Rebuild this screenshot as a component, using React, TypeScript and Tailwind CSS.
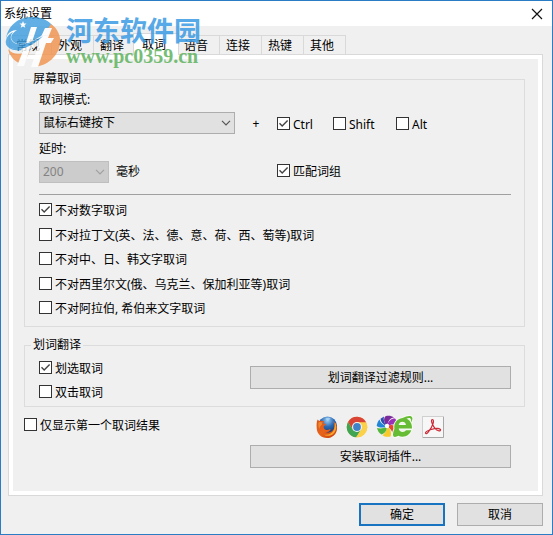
import React from "react";

const tabs = ["常规", "外观", "翻译", "取词", "语音", "连接", "热键", "其他"];

const languageRules = [
  { label: "不对数字取词", checked: true },
  { label: "不对拉丁文(英、法、德、意、荷、西、萄等)取词" },
  { label: "不对中、日、韩文字取词" },
  { label: "不对西里尔文(俄、乌克兰、保加利亚等)取词" },
  { label: "不对阿拉伯, 希伯来文字取词" },
];

type CheckProps = {
  label: string;
  checked?: boolean;
};

function Check({ label, checked }: CheckProps) {
  return (
    <label className="flex items-start gap-[3px] whitespace-nowrap leading-4">
      <span className="relative size-[13px] shrink-0">
        <input
          type="checkbox"
          defaultChecked={checked}
          className="peer block size-[13px] appearance-none border border-[#333333] bg-white"
        />
        <svg
          viewBox="0 0 13 13"
          className="pointer-events-none absolute inset-0 hidden size-[13px] peer-checked:block"
          fill="none"
          stroke="#444"
          strokeWidth="1.4"
        >
          <path d="M2.5 6.3 5.2 9 10.6 3.6" />
        </svg>
      </span>
      <span>{label}</span>
    </label>
  );
}

type SelectBoxProps = {
  id: string;
  value: string;
  disabled?: boolean;
  className: string;
};

function SelectBox({ id, value, disabled, className }: SelectBoxProps) {
  return (
    <div className={`relative ${className}`}>
      <select
        id={id}
        disabled={disabled}
        className="block h-[22px] w-full appearance-none border border-[#adadad] bg-[#e1e1e1] pl-[3px] pr-5 text-black opacity-100 disabled:border-[#bfbfbf] disabled:bg-[#cccccc] disabled:text-[#838383]"
      >
        <option>{value}</option>
      </select>
      <svg
        viewBox="0 0 10 6"
        className="pointer-events-none absolute right-1 top-2 h-[6px] w-[10px]"
        fill="none"
        stroke={disabled ? "#a0a0a0" : "#555"}
        strokeWidth="1.2"
      >
        <path d="M1 .8 5 4.8 9 .8" />
      </svg>
    </div>
  );
}

type PushButtonProps = {
  children: React.ReactNode;
  primary?: boolean;
  className?: string;
};

function PushButton({ children, primary, className = "" }: PushButtonProps) {
  return (
    <button
      type="button"
      className={[
        "h-[23px] bg-[#e1e1e1] text-center leading-4",
        primary ? "border-2 border-[#1874c0]" : "border border-[#adadad]",
        className,
      ].join(" ")}
    >
      {children}
    </button>
  );
}

function FirefoxIcon() {
  return (
    <svg viewBox="0 0 22 22" className="size-[22px]">
      <defs>
        <radialGradient id="ffGlobe" cx=".5" cy=".2" r=".75">
          <stop offset="0" stopColor="#9fd0f5" />
          <stop offset=".45" stopColor="#2c6bb5" />
          <stop offset="1" stopColor="#132a5e" />
        </radialGradient>
        <linearGradient id="ffFox" x1="0" y1="0" x2="1" y2="1">
          <stop offset="0" stopColor="#d9541b" />
          <stop offset=".5" stopColor="#e8641b" />
          <stop offset="1" stopColor="#c23a10" />
        </linearGradient>
      </defs>
      <circle cx="11.5" cy="10" r="9.5" fill="url(#ffGlobe)" />
      <path
        d="M1.6 3.6C2.2 4.5 3 5 3.8 5c1.6-.6 3.4-.3 4.6.6-.9.5-1.3 1.2-1.2 2l2.6.5c.2.9-1.6 1.5-2.1 2.5-.3 2 1.3 3.6 3.3 3.5 1.7-.1 2.2-1.3 3.7-.7-.9 2.2-3.4 3-5.6 2.3 3.6 2 8.7-.4 9.2-4.8.3-2.3-.4-4.2-1.5-5.8 2.5 1.6 4.5 4.4 4.2 7.8C20.5 18.2 16.4 22 11 22 5.3 22 .9 17.8.7 12.2.6 9 .4 6 1.6 3.6Z"
        fill="url(#ffFox)"
      />
      <path
        d="M19.2 6.5c1.7 3.7 1.3 8.5-1.8 11.3-2.8 2.5-7 2.6-9.9.6 4.2.9 8.7-.7 10.3-4.5 1-2.4.9-5.1 1.4-7.4Z"
        fill="#f5a52c"
      />
      <path d="M2.5 6.5c1.5-.8 3.4-.5 4.3.1-.9.7-1 1.7-.8 2.1-1.5 1-2.5 2.3-2.6 4.3C2.4 11 2 8.5 2.5 6.5Z" fill="#f0872a" />
      <path d="M9.5 2.5c1.5-1 3.5-1 5-.3-.5 1.5-1.6 1.2-2.3 2.5-1-.5-2-.7-2.7-2.2Z" fill="#b4dcf5" opacity=".7" />
    </svg>
  );
}

function ChromeIcon() {
  return (
    <svg viewBox="0 0 22 22" className="size-[22px]">
      <circle cx="11" cy="11" r="10.3" fill="#fbd14b" />
      <path d="M2 6A10.3 10.3 0 0 1 20.2 6.5L11 6.5 6.7 13.5Z" fill="#d94436" />
      <path d="M2 6A10.3 10.3 0 0 0 10.2 21.3L15.2 13.5 11 15.5 6.5 13.2Z" fill="#3fa553" />
      <path d="M20.2 6.5H11l4.2 7-5 7.8A10.3 10.3 0 0 0 20.2 6.5Z" fill="#fbd14b" />
      <circle cx="11" cy="11" r="5" fill="#f4f4f4" />
      <circle cx="11" cy="11" r="3.9" fill="#4183c8" />
    </svg>
  );
}

function PinwheelIcon() {
  return (
    <svg viewBox="0 0 38 24" className="h-6 w-[38px]">
      <path d="M11 11C8 8 7 4 9.5 1.2c3-1 6-.4 8.5 1.3C14 3 12 6 11 11Z" fill="#7a2c9c" />
      <path d="M11 11c1-5 4-7.5 8-7.5 2 2 2.7 5 2.5 7.5-3-2-6-2-10.5 0Z" fill="#9a2fb8" />
      <path d="M11 11c4-2 8-1 10 2-.5 3-2 5-4 7-.5-4-2.5-6.5-6-9Z" fill="#e8432e" />
      <path d="M11 11c3.5 3 5 6.5 3.5 10.4-3 .8-6 .2-8-1.2C9.5 18 11 15 11 11Z" fill="#f7c92a" />
      <path d="M11 11c0 4-2 7.5-5.5 8.5C3 18 1.5 15.5 1 13c3.5 1 7 .5 10-2Z" fill="#54b53c" />
      <path d="M11 11C7.5 13.3 4 13 .7 11 .9 8.5 2 6 3.5 4.5 4.5 8 7 10.3 11 11Z" fill="#2286d8" />
      <path d="M11 11C7 9.5 4.7 7 4.5 3.7L8 1.5C7 5 8.5 8.5 11 11Z" fill="#2c4fb4" />
      <circle cx="11" cy="11" r="2.2" fill="#fff" />
      <path
        d="M26.5 3C31 .6 35 .2 36 2c.9 1.5.2 3.6-.8 5.6-.2-2.2 0-3.3-.8-4.1-.8-.8-2.4-.5-4 .3 3.5 1.2 5.8 4.7 5.600 9.700H22.700c.3 2.300 1.900 3.500 4 3.500 1.400 0 2.500-.6 3.200-1.700h5.400c-1.400 4.200-4.600 6.400-8.800 6.400-1.600 0-2.900-.3-4.100-.9-1.900 1.200-4.200 1.700-5 .5-.9-1.400-.2-4.700 1-7.400C17.500 8 21 4 26.500 3Zm-3.800 7h7.200c-.2-2-1.600-3.200-3.500-3.200S23.200 8 22.700 10Z"
        fill="#66bd35"
        stroke="#f5fbf0"
        strokeWidth="2"
        strokeLinejoin="round"
        paintOrder="stroke"
      />
    </svg>
  );
}

function PdfIcon() {
  return (
    <svg viewBox="0 0 22 22" className="size-[22px]">
      <rect x=".5" y=".5" width="21" height="21" fill="#f7f7f7" stroke="#d0d0d0" />
      <path d="M1 21.5h20.500V1" fill="none" stroke="#a8a8a8" />
      <path
        d="M10.3 3.5c-1.2.1-1 2 .2 4.7 1.2 2.7 3.3 5.8 5.9 6.5 1.7.4 2.8-.6 1.8-1.5-1.4-1.1-5.8-.7-9 .3-3 .9-5.8 2.3-5.7 3.5.1 1 1.400.7 2.500-.7 2.200-2.700 4.600-6.700 5.300-9.500.4-2 0-3.300-1-3.300Z"
        fill="none"
        stroke="#cc2936"
        strokeWidth="1.2"
      />
    </svg>
  );
}

function Watermark() {
  return (
    <div
      aria-hidden="true"
      className="pointer-events-none absolute left-1 top-[15px] z-20 flex gap-[5px] whitespace-nowrap"
    >
      <svg viewBox="0 0 56 52" className="h-[52px] w-14 opacity-80">
        <path d="M1 24C2 11 12 1 27 1c9 0 16 3 21 9L37 24c-9 8-22 13-31 9C2 31 0 28 1 24Z" fill="#3a9cdf" />
        <path d="M46 8c7 5 10 12 9 20-2 12-12 22-27 23L38 20Z" fill="#f1924a" />
        <path d="M3 33c5 6 13 6 22 2l-7 14C10 46 5 41 3 33Z" fill="#f1924a" />
        {/* two leaning stems, joined by the sweeping bar */}
        <path d="M26 11h6l-5 15 8-3 5-11h7l-4 10h6l-3 5h-5l-8 24h-7l7-21-8 3-6 17h-7l6-15-3 1 4-7 2-2Z" fill="#fff" />
        <path d="M1 23C2 17 7 14 12 14c-5 3-7 7-5 10 4 7 17 4 29-4l8-5c-7 10-22 19-34 18C4 32 0 28 1 23Z" fill="#fff" />
        <path d="M1 26c0-5 3-8 7-10-3 4-3 7 0 10 6 5 18 1 30-6-9 9-20 14-29 13-5-1-8-3-8-7Z" fill="#3a9cdf" />
        <path d="m18 5 1 2.5h2.5l-2 1.8.8 2.5L18 10.4l-2.3 1.4.8-2.5-2-1.8H17Z" fill="#fff" />
      </svg>
      <div className="font-bold opacity-85">
        <p className="font-['Noto_Sans_CJK_SC',sans-serif] text-[27px] leading-7 text-[#3b9be4]">
          河东软件园
        </p>
        <p className="font-['Liberation_Serif',serif] text-xl leading-6 text-[#5fb35f]">
          www.pc0359.cn
        </p>
      </div>
    </div>
  );
}

export default function App() {
  return (
    <main className="relative border border-[#2a7dc4] bg-[#f0f0f0] font-['Noto_Sans','Noto_Sans_CJK_SC',sans-serif] text-xs leading-4 text-black">
      <header className="flex h-[25px] items-center justify-between bg-white pl-[3px] pr-[9px]">
        <h1>系统设置</h1>
        <button type="button" aria-label="关闭" className="size-3">
          <svg viewBox="0 0 12 12" className="size-3" stroke="#111" strokeWidth="1.2">
            <path d="m1 1 10 10M11 1 1 11" />
          </svg>
        </button>
      </header>

      <div className="pb-2 pl-[7px] pr-[9px] pt-[7px]">
        <div role="tablist" className="flex items-end px-px">
          {tabs.map((tab) => {
            const active = tab === "取词";
            return (
              <button
                key={tab}
                type="button"
                role="tab"
                aria-selected={active}
                className={[
                  "border-x border-t border-[#d9d9d9] text-left",
                  active
                    ? "relative z-10 -mx-[2px] -mb-px h-[22px] w-[46px] bg-white pl-2"
                    : "-mr-px h-[19px] w-[43px] bg-[#f0f0f0] pl-[6px] pt-[2px]",
                ].join(" ")}
              >
                {tab}
              </button>
            );
          })}
        </div>

        <div role="tabpanel" className="border border-[#d9d9d9] bg-white p-1">
          <div className="bg-[#f0f0f0] pb-[23px] pl-[11px] pr-[13px] pt-3">
            <fieldset className="border border-[#dcdcdc] pb-[9px] pl-[14px] pr-[13px]">
              <legend className="-ml-2 px-[2px]">屏幕取词</legend>
              <div className="pt-[5px]">
                <label htmlFor="mode" className="block">取词模式:</label>
                <div className="mt-1 flex items-center">
                  <SelectBox id="mode" value="鼠标右键按下" className="w-[196px]" />
                  <span className="w-[42px] pt-[2px] text-center">+</span>
                  <div className="flex gap-[15px] pt-1">
                    <span className="w-[41px]"><Check label="Ctrl" checked /></span>
                    <span className="w-12"><Check label="Shift" /></span>
                    <Check label="Alt" />
                  </div>
                </div>
                <label htmlFor="delay" className="mt-[7px] block">延时:</label>
                <div className="mt-1 flex items-center">
                  <SelectBox id="delay" value="200" disabled className="w-[70px]" />
                  <span className="w-[168px] pl-[7px]">毫秒</span>
                  <Check label="匹配词组" checked />
                </div>
                <hr className="mt-[11px] border-[#a0a0a0]" />
                <div className="mt-2 flex h-[114px] flex-col justify-between">
                  {languageRules.map((rule) => (
                    <Check key={rule.label} label={rule.label} checked={rule.checked} />
                  ))}
                </div>
              </div>
            </fieldset>

            <fieldset className="mt-[10px] border border-[#dcdcdc] pb-[5px] pl-[14px] pr-[13px]">
              <legend className="-ml-2 px-[2px]">划词翻译</legend>
              <div className="flex items-start pt-2">
                <div className="flex w-[211px] flex-col gap-2">
                  <Check label="划选取词" checked />
                  <Check label="双击取词" />
                </div>
                <PushButton className="mt-[5px] flex-1">划词翻译过滤规则...</PushButton>
              </div>
            </fieldset>

            <div className="mt-2 flex items-start pr-[14px]">
              <div className="w-[226px] pt-[3px]">
                <Check label="仅显示第一个取词结果" />
              </div>
              <div className="flex-1">
                <div className="flex h-6 items-center gap-2 pl-[66px]">
                  <FirefoxIcon />
                  <ChromeIcon />
                  <PinwheelIcon />
                  <PdfIcon />
                </div>
                <PushButton className="mt-[6px] block w-full">安装取词插件...</PushButton>
              </div>
            </div>
          </div>
        </div>

        <footer className="mt-[7px] flex justify-end gap-3">
          <PushButton primary className="w-[86px]">确定</PushButton>
          <PushButton className="w-[86px]">取消</PushButton>
        </footer>
      </div>

      <Watermark />
    </main>
  );
}
